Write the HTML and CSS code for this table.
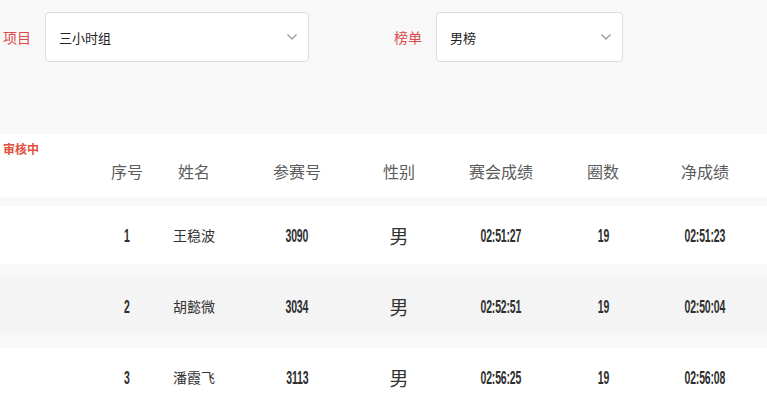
FILE: index.html
```html
<!DOCTYPE html>
<html lang="zh">
<head>
<meta charset="utf-8">
<link rel="stylesheet" href="styles.css">
</head>
<body>
<div class="page">
  <div class="filters">
    <div class="field">
      <span class="label">项目</span>
      <div class="select sel-wide">
        <span class="sel-text">三小时组</span>
        <svg class="chev" width="12" height="8" viewBox="0 0 12 8"><path d="M1.5 1.5 L6 6 L10.5 1.5" fill="none" stroke="#a0a0a0" stroke-width="1.5"/></svg>
      </div>
    </div>
    <div class="field field-2">
      <span class="label">榜单</span>
      <div class="select sel-narrow">
        <span class="sel-text">男榜</span>
        <svg class="chev" width="12" height="8" viewBox="0 0 12 8"><path d="M1.5 1.5 L6 6 L10.5 1.5" fill="none" stroke="#a0a0a0" stroke-width="1.5"/></svg>
      </div>
    </div>
  </div>

  <div class="table">
    <div class="row head">
      <div class="cell badge-cell"><span class="badge">审核中</span></div>
      <div class="cell">序号</div>
      <div class="cell">姓名</div>
      <div class="cell">参赛号</div>
      <div class="cell">性别</div>
      <div class="cell">赛会成绩</div>
      <div class="cell">圈数</div>
      <div class="cell">净成绩</div>
    </div>
    <div class="row body">
      <div class="cell"></div>
      <div class="cell"><span class="num">1</span></div>
      <div class="cell name">王稳波</div>
      <div class="cell"><span class="num">3090</span></div>
      <div class="cell sex">男</div>
      <div class="cell"><span class="num">02:51:27</span></div>
      <div class="cell"><span class="num">19</span></div>
      <div class="cell"><span class="num">02:51:23</span></div>
    </div>
    <div class="row body alt">
      <div class="cell"></div>
      <div class="cell"><span class="num">2</span></div>
      <div class="cell name">胡懿微</div>
      <div class="cell"><span class="num">3034</span></div>
      <div class="cell sex">男</div>
      <div class="cell"><span class="num">02:52:51</span></div>
      <div class="cell"><span class="num">19</span></div>
      <div class="cell"><span class="num">02:50:04</span></div>
    </div>
    <div class="row body">
      <div class="cell"></div>
      <div class="cell"><span class="num">3</span></div>
      <div class="cell name">潘霞飞</div>
      <div class="cell"><span class="num">3113</span></div>
      <div class="cell sex">男</div>
      <div class="cell"><span class="num">02:56:25</span></div>
      <div class="cell"><span class="num">19</span></div>
      <div class="cell"><span class="num">02:56:08</span></div>
    </div>
  </div>
</div>
</body>
</html>
```

FILE: styles.css
```css
html, body {
  margin: 0;
  padding: 0;
  background: #f8f8f8;
}
body {
  font-family: "Noto Sans CJK SC", "Liberation Sans", sans-serif;
  color: #333;
  overflow: hidden;
}
.page {
  width: 767px;
  overflow: hidden;
}
.filters {
  display: flex;
  align-items: center;
  padding: 12px 0 0 3px;
  height: 50px;
}
.field {
  display: flex;
  align-items: center;
  gap: 14px;
}
.field-2 {
  margin-left: 85px;
}
.label {
  font-size: 14px;
  color: #dc4a4a;
  line-height: 20px;
}
.select {
  box-sizing: border-box;
  height: 50px;
  background: #fff;
  border: 1px solid #dcdcdc;
  border-radius: 4px;
  display: flex;
  align-items: center;
  justify-content: space-between;
  padding: 0 10px 0 13px;
}
.sel-wide { width: 264px; }
.sel-narrow { width: 187px; }
.sel-text {
  font-size: 13px;
  color: #222;
}
.chev { display: block; }

.table {
  margin-top: 72px;
  display: flex;
  flex-direction: column;
}
.row {
  display: grid;
  grid-template-columns: 94px 66px 68px 138px 66px 138px 66px 138px;
  align-items: center;
  background: #fff;
}
.cell {
  text-align: center;
  white-space: nowrap;
}
.head {
  height: 63px;
  box-sizing: border-box;
  padding-top: 11px;
  font-size: 16px;
  color: #5c5c5c;
  margin-bottom: 9px;
}
.badge-cell {
  align-self: start;
  text-align: left;
  padding-left: 3px;
  margin-top: -3px;
  font-size: 12px;
  line-height: 14px;
}
.badge {
  display: block;
  font-size: 12px;
  font-weight: bold;
  color: #e0503c;
  line-height: 14px;
}
.body {
  height: 58px;
  margin-bottom: 13px;
}
.alt {
  background: #f4f4f4;
}
.name {
  font-size: 14px;
  color: #333;
}
.sex {
  font-size: 19px;
  color: #333;
}
.num {
  display: inline-block;
  font-family: "Liberation Sans", sans-serif;
  font-weight: bold;
  font-size: 17.5px;
  color: #2e2e2e;
  transform: scaleX(0.6);
  letter-spacing: -0.3px;
}
```
